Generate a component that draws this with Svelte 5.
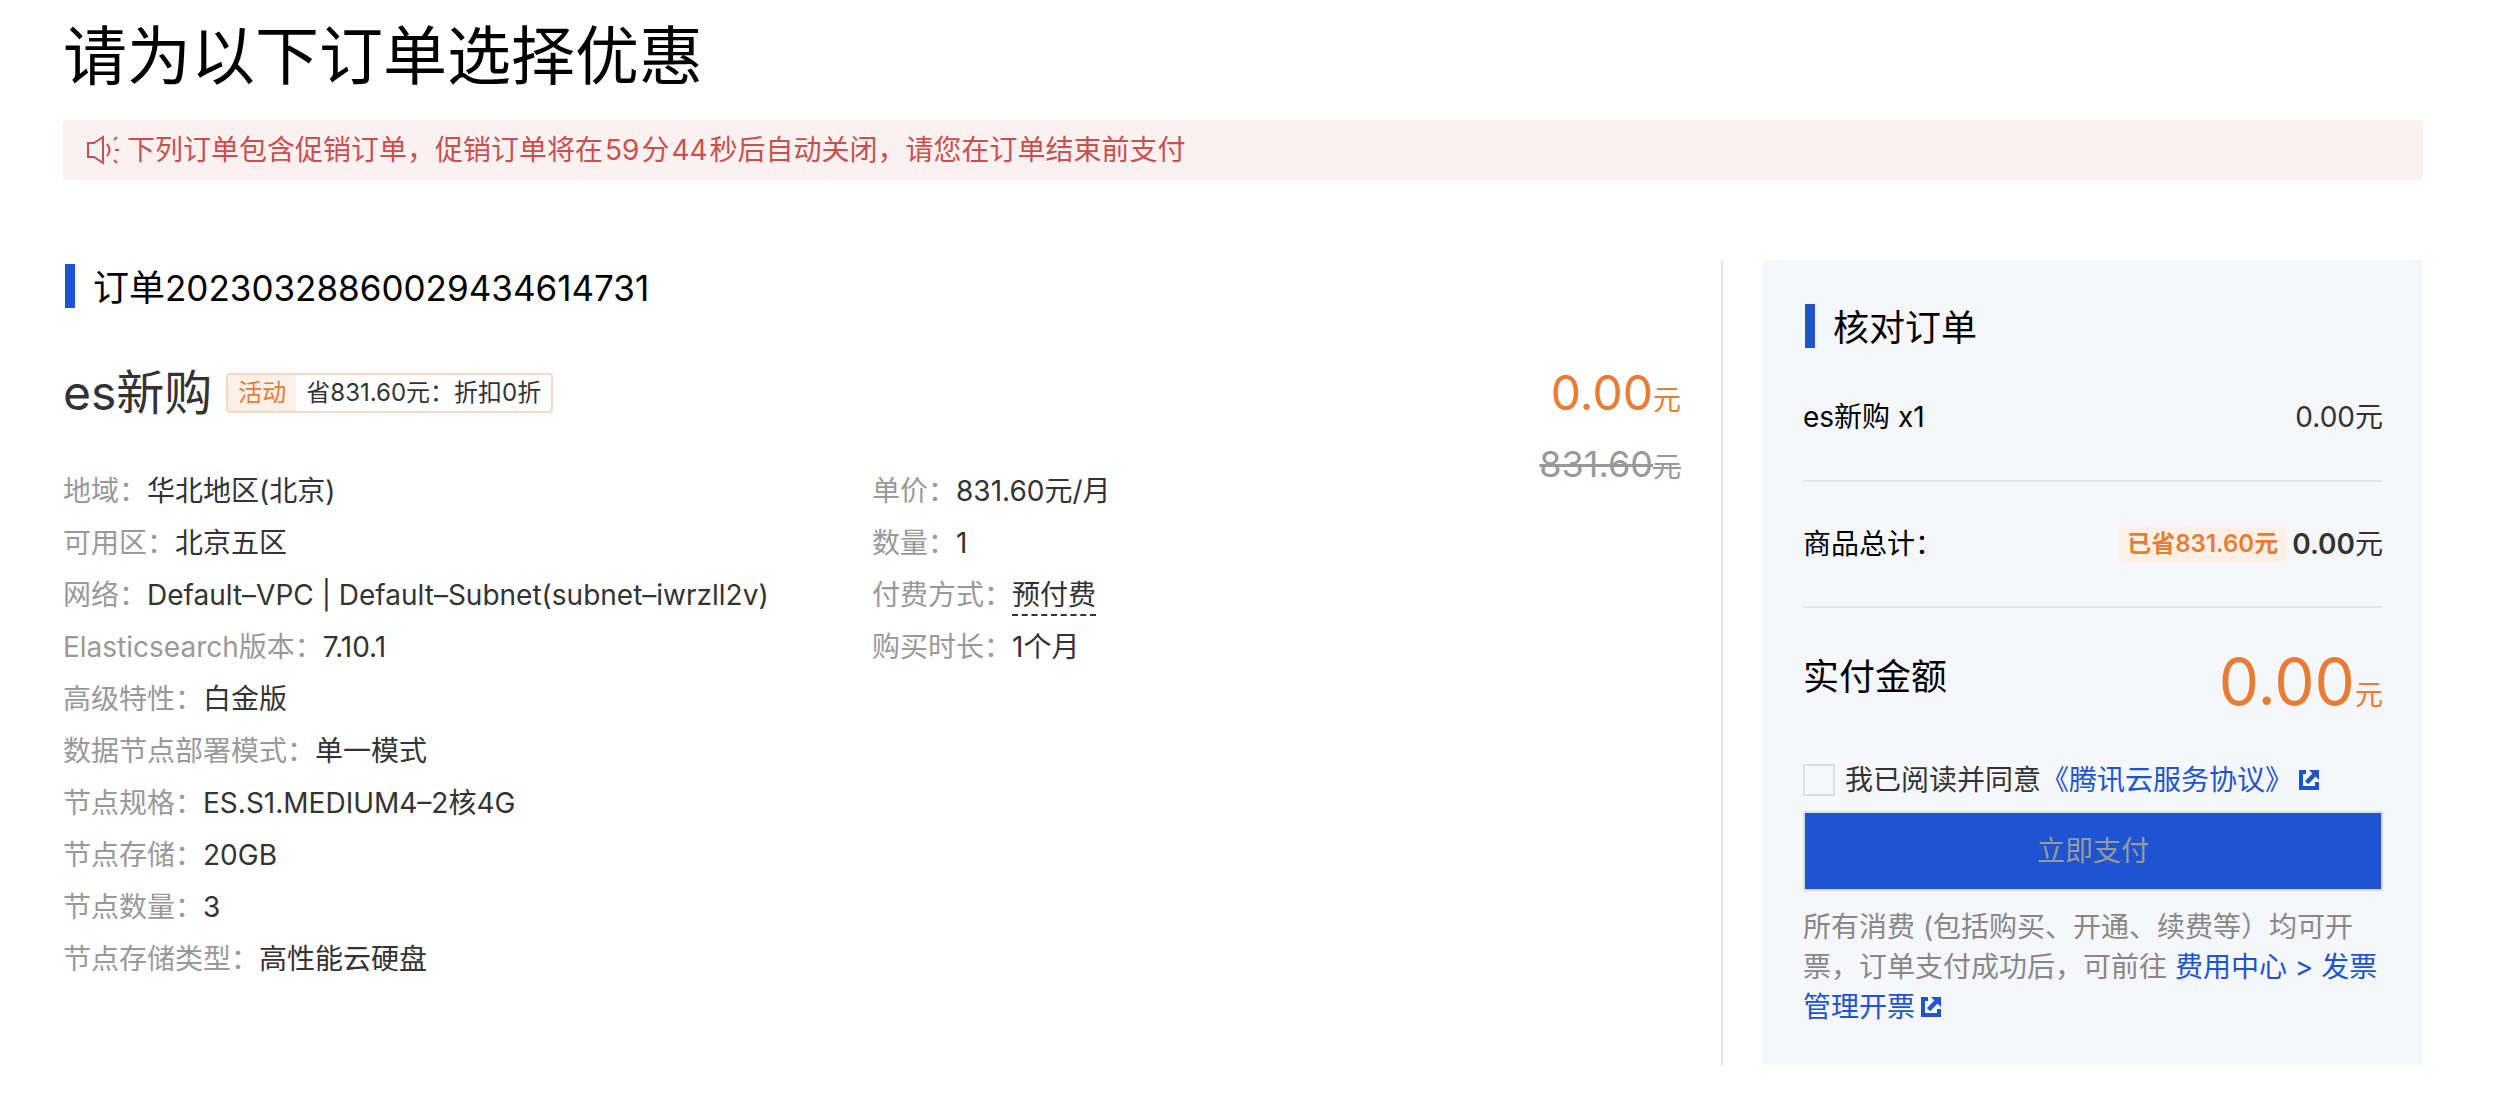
<script>
  let agreed = $state(false);

  const specs = [
    ['地域', '华北地区(北京)'],
    ['可用区', '北京五区'],
    ['网络', 'Default–VPC | Default–Subnet(subnet–iwrzll2v)'],
    ['Elasticsearch版本', '7.10.1'],
    ['高级特性', '白金版'],
    ['数据节点部署模式', '单一模式'],
    ['节点规格', 'ES.S1.MEDIUM4–2核4G'],
    ['节点存储', '20GB'],
    ['节点数量', '3'],
    ['节点存储类型', '高性能云硬盘'],
  ];

  const billing = [
    ['单价', '831.60元/月'],
    ['数量', '1'],
    ['付费方式', '预付费', true],
    ['购买时长', '1个月'],
  ];
</script>

{#snippet external()}
  <svg class="external" viewBox="0 0 20 20" aria-hidden="true">
    <path d="M0 0H7V4H4V16H16V12H20V20H0Z" />
    <path d="M10 0H20V10L16.500 6.500L9.200 14.200L6 11L13.400 3.500Z" />
  </svg>
{/snippet}

{#snippet specList(rows)}
  <dl class="specs">
    {#each rows as [label, value, hinted]}
      <div class="spec">
        <dt>{label}：</dt>
        <dd><span class:hinted>{value}</span></dd>
      </div>
    {/each}
  </dl>
{/snippet}

<main class="page">
  <h1>请为以下订单选择优惠</h1>

  <div class="notice" role="status">
    <svg class="horn" viewBox="0 0 36 30" fill="none" stroke="currentColor" stroke-width="2" aria-hidden="true">
      <path d="M3 8H9L18 2V28L9 22H3Z" />
      <path d="M22 9Q27 15 22 21M29 5L32 2M30 15H34M29 25L32 28" />
    </svg>
    <p>下列订单包含促销订单，促销订单将在<span class="count">59</span>分<span class="count">44</span>秒后自动关闭，请您在订单结束前支付</p>
  </div>

  <div class="columns">
    <section class="order">
      <h2><span>订单<span class="number">20230328860029434614731</span></span></h2>
      <div class="product">
        <div class="name">
          <h3>es新购</h3>
          <div class="promo">
            <span class="promo-tag">活动</span>
            <span class="promo-text">省831.60元：折扣0折</span>
          </div>
        </div>
        <div class="prices">
          <div class="price"><span class="amount">0.00</span>元</div>
          <div class="was"><s class="amount">831.60</s><s>元</s></div>
        </div>
      </div>
      <div class="details">
        {@render specList(specs)}
        {@render specList(billing)}
      </div>
    </section>

    <aside class="summary">
      <h2>核对订单</h2>
      <div class="line">
        <span>es新购 x1</span>
        <span class="value">0.00元</span>
      </div>
      <div class="line total">
        <span>商品总计：</span>
        <span class="value">
          <span class="saved">已省831.60元</span>
          <span><strong>0.00</strong>元</span>
        </span>
      </div>
      <div class="payable">
        <span class="payable-label">实付金额</span>
        <span class="payable-value"><span class="amount">0.00</span>元</span>
      </div>
      <div class="agree">
        <input id="agree" type="checkbox" bind:checked={agreed} />
        <label for="agree">我已阅读并同意</label>
        <a href="#agreement">《腾讯云服务协议》{@render external()}</a>
      </div>
      <button class="pay" type="button" disabled={!agreed}>立即支付</button>
      <p class="note">
        所有消费 (包括购买、开通、续费等）均可开票，订单支付成功后，可前往
        <a href="#invoice">费用中心 &gt; 发票管理开票{@render external()}</a>
      </p>
    </aside>
  </div>
</main>

<style>
  :global(body) {
    background: #fff;
  }

  .page {
    padding: 8px 73px 34px 63px;
    color: #333;
    font: 28px/40px Inter, 'Noto Sans CJK SC', sans-serif;
  }

  h1,
  h2,
  h3,
  p,
  dl,
  dd {
    margin: 0;
    font-weight: 400;
  }

  a {
    color: #1e54d0;
    text-decoration: none;
  }

  h1 {
    color: #000;
    font-size: 64px;
    line-height: 96px;
    margin-bottom: 16px;
  }

  .notice {
    display: flex;
    align-items: center;
    height: 60px;
    padding-left: 22px;
    gap: 6px;
    border-radius: 4px;
    background: #fbf1f2;
    color: #c9504b;
  }

  .horn {
    width: 36px;
    height: 30px;
  }

  .count {
    margin: 0 2px;
  }

  .columns {
    display: flex;
    margin-top: 80px;
    gap: 40px;
  }

  .order {
    flex: 1;
    padding-right: 40px;
    border-right: 2px solid #e5e5e5;
  }

  h2 {
    display: flex;
    align-items: flex-start;
    height: 44px;
    margin-left: 2px;
    color: #000;
    font-size: 36px;
    line-height: 48px;
  }

  h2::before {
    content: '';
    width: 10px;
    height: 44px;
    margin-right: 18px;
    background: #1e54d0;
  }

  .number {
    font-size: 35px;
  }

  .order h2 {
    margin-top: 4px;
  }

  .product {
    display: flex;
    justify-content: space-between;
    height: 157px;
    padding-top: 55px;
    box-sizing: border-box;
  }

  .name {
    display: flex;
    align-items: center;
    gap: 14px;
    height: 60px;
  }

  h3 {
    font-size: 48px;
    line-height: 60px;
  }

  .promo {
    display: flex;
    border: 2px solid #f6d8c5;
    border-radius: 4px;
    font-size: 24px;
    line-height: 36px;
  }

  .promo-tag {
    padding: 0 10px;
    background: #fdf0e7;
    color: #e97c35;
  }

  .promo-text {
    padding: 0 10px;
  }

  .prices {
    display: flex;
    flex-direction: column;
    align-items: flex-end;
  }

  .price {
    color: #e97c35;
    line-height: 60px;
  }

  .price .amount {
    font-size: 48px;
  }

  .was {
    margin-top: 4px;
    color: #999;
    line-height: 60px;
  }

  .was .amount {
    font-size: 36px;
  }

  .details {
    display: grid;
    grid-template-columns: 1fr 1fr;
  }

  .spec {
    display: flex;
    height: 52px;
    line-height: 52px;
  }

  dt {
    color: #999;
  }

  .hinted {
    padding-bottom: 2px;
    border-bottom: 2px dashed #333;
  }

  .summary {
    width: 580px;
    padding: 44px 40px 38px;
    background: #f5f7fb;
  }

  .line {
    display: flex;
    align-items: center;
    justify-content: space-between;
    height: 134px;
    box-sizing: border-box;
    padding-top: 6px;
    border-bottom: 2px solid #e3e5e9;
    color: #000;
  }

  .line.total {
    height: 126px;
    padding-top: 0;
  }

  .value {
    display: flex;
    align-items: center;
    gap: 6px;
    color: #333;
  }

  .saved {
    padding: 0 8px;
    background: #fdf0e7;
    color: #e97c35;
    font-size: 24px;
    line-height: 36px;
    font-weight: 600;
  }

  strong {
    font-weight: 600;
  }

  .payable {
    display: flex;
    justify-content: space-between;
    height: 154px;
    padding-top: 34px;
    box-sizing: border-box;
  }

  .payable-label {
    color: #000;
    font-size: 36px;
    line-height: 70px;
  }

  .payable-value {
    color: #e97c35;
    line-height: 80px;
  }

  .payable-value .amount {
    font-size: 64px;
  }

  .agree {
    display: flex;
    align-items: center;
    height: 36px;
    margin-bottom: 13px;
  }

  .agree input {
    appearance: none;
    width: 32px;
    height: 32px;
    margin: 0 10px 0 0;
    border: 2px solid #dcdfe5;
    background: #f7f8fb;
  }

  .agree input:checked {
    background: #1e54d0;
  }

  .external {
    width: 20px;
    height: 20px;
    margin-left: 6px;
    fill: currentColor;
  }

  .pay {
    display: block;
    width: 100%;
    height: 80px;
    padding: 0;
    border: 2px solid #d5dcec;
    background: #1e54d0;
    color: #999;
    font: inherit;
  }

  .pay:enabled {
    color: #fff;
  }

  .note {
    margin-top: 16px;
    color: #888;
  }
</style>
